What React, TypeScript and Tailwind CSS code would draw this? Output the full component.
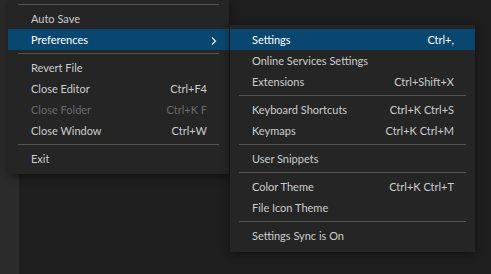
type Entry =
  | { sep: true }
  | { label: string; keys?: string; active?: boolean; disabled?: boolean; sub?: boolean };

const fileMenu: Entry[] = [
  { sep: true },
  { label: "Auto Save" },
  { label: "Preferences", active: true, sub: true },
  { sep: true },
  { label: "Revert File" },
  { label: "Close Editor", keys: "Ctrl+F4" },
  { label: "Close Folder", keys: "Ctrl+K F", disabled: true },
  { label: "Close Window", keys: "Ctrl+W" },
  { sep: true },
  { label: "Exit" },
];

const prefsMenu: Entry[] = [
  { label: "Settings", keys: "Ctrl+,", active: true },
  { label: "Online Services Settings" },
  { label: "Extensions", keys: "Ctrl+Shift+X" },
  { sep: true },
  { label: "Keyboard Shortcuts", keys: "Ctrl+K Ctrl+S" },
  { label: "Keymaps", keys: "Ctrl+K Ctrl+M" },
  { sep: true },
  { label: "User Snippets" },
  { sep: true },
  { label: "Color Theme", keys: "Ctrl+K Ctrl+T" },
  { label: "File Icon Theme" },
  { sep: true },
  { label: "Settings Sync is On" },
];

function Chevron() {
  return (
    <svg width="8" height="10" viewBox="0 0 8 10">
      <path d="M2 1.5 L5.5 5 L2 8.5" fill="none" stroke="#e8e8e8" strokeWidth="1.2" />
    </svg>
  );
}

function Menu({
  items,
  sepX,
  padL,
  padR,
  keysGap,
}: {
  items: Entry[];
  sepX: string;
  padL: string;
  padR: string;
  keysGap: string;
}) {
  return (
    <>
      {items.map((it, i) => {
        if ("sep" in it) {
          return (
            <div key={i} className={`flex h-[7px] items-center ${sepX}`}>
              <div className="h-px w-full bg-[#545454]" />
            </div>
          );
        }
        const color = it.active
          ? "bg-[#094771] text-white"
          : it.disabled
          ? "text-[#6b6b6b]"
          : "text-[#cccccc]";
        return (
          <div key={i} className={`flex h-[21px] items-center justify-between pt-[2px] ${padL} ${padR} ${color}`}>
            <span>{it.label}</span>
            {it.sub ? <Chevron /> : <span className={keysGap}>{it.keys}</span>}
          </div>
        );
      })}
    </>
  );
}

export default function App() {
  return (
    <div className="relative flex h-[274px] w-[491px] overflow-hidden bg-[#1e1e1e] font-['Lato','Liberation_Sans',sans-serif] text-[11px]">
      <div className="w-[19px] bg-[#2b2b2b]" />
      <div className="flex-1" />

      {/* File menu */}
      <div className="absolute left-[8px] top-0 w-[221px] bg-[#252526] pt-[1px] pb-[5px] shadow-[0_2px_8px_rgba(0,0,0,0.45)]">
        <Menu items={fileMenu} sepX="mx-[10px]" padL="pl-[23px]" padR="pr-[11px]" keysGap="mr-[11px]" />
      </div>

      {/* Preferences submenu */}
      <div className="absolute left-[230px] top-[25px] w-[245px] bg-[#252526] pt-[4px] pb-[6px] shadow-[0_2px_8px_rgba(0,0,0,0.45)]">
        <Menu items={prefsMenu} sepX="mx-[9px]" padL="pl-[22px]" padR="pr-[21px]" keysGap="" />
      </div>
    </div>
  );
}
